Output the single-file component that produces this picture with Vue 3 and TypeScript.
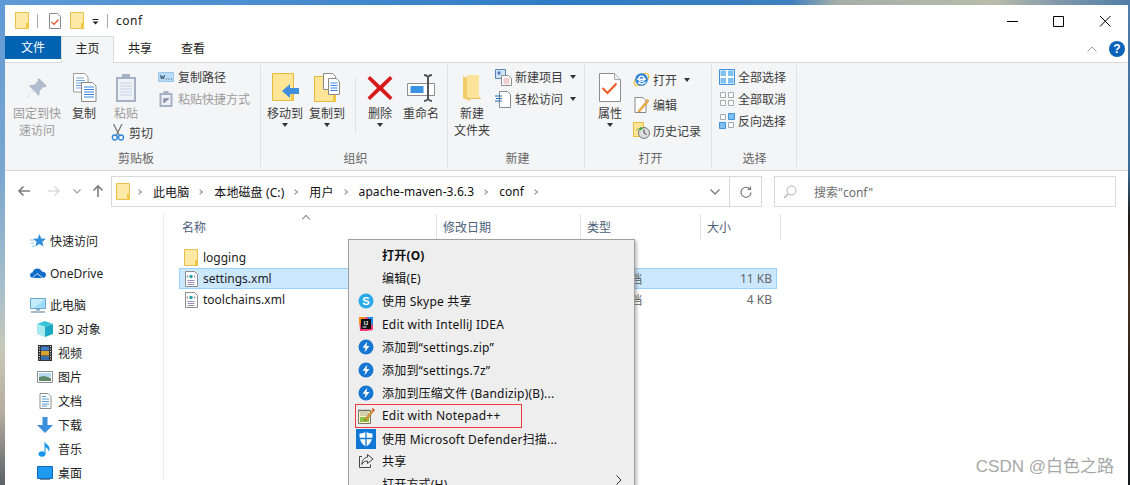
<template>
  <div class="desktop">
    <!-- shared icons -->
    <svg class="defs" aria-hidden="true">
      <symbol id="folder" viewBox="0 0 14 17">
        <path d="M.5.5h13v16H.5z" fill="#ffe9a6" stroke="#e9bf4d" />
        <path d="M11 11h3v6h-3z" fill="#f3c746" />
      </symbol>
      <symbol id="xml" viewBox="0 0 16 16">
        <path d="M2.500.5h9l3 3v12h-12z" fill="#fff" stroke="#8d8d8d" />
        <path d="M5 4.500 3.800 5.500 5 6.500M11 4.500l1.200 1L11 6.500" fill="none" stroke="#666" stroke-width=".8" />
        <circle cx="8" cy="5.500" r="1.800" fill="#2ba3a8" />
        <path d="M4.500 9.500h7M4.500 11.500h7M4.500 13.500h7" stroke="#9a8fbd" />
      </symbol>
      <symbol id="star" viewBox="0 0 16 16">
        <path d="m9.500 1 1.700 4.400 4.800.3-3.700 3 1.200 4.800-4-2.600-4.100 2.600 1.200-4.800-3.700-3 4.900-.3z" fill="#2f8fdc" />
        <path d="M0 7h4M1 10h3M2 13h3" stroke="#8cc4ef" />
      </symbol>
      <symbol id="cloud" viewBox="0 0 16 16">
        <path d="M3.500 13C1.500 13 0 11.800 0 10.200 0 8.700 1 7.700 2.500 7.500 3.300 5 5.300 3.500 7.500 3.500c2 0 3.600 1.200 4.200 3 2.300-.2 4.300 1.300 4.300 3.300 0 1.800-1.400 3.200-3.200 3.200z" fill="#0f6cc8" />
        <path d="M2.500 13 7 8.500l6 4.500" fill="none" stroke="#fff" stroke-width=".8" />
      </symbol>
      <symbol id="pc" viewBox="0 0 16 16">
        <path d="M.5 1.500h15v10H.5z" fill="#9fdcf8" stroke="#6aa8cf" />
        <path d="M1 2h14L3 11H1z" fill="#c5ecfc" />
        <path d="M6 12h4v1.500H6z" fill="#8ba4b8" />
        <path d="M1 15h14" stroke="#8ba4b8" stroke-width="1.500" />
      </symbol>
      <symbol id="cube" viewBox="0 0 16 16">
        <path d="M8 0 16 3 8 6 0 3z" fill="#35c4d8" />
        <path d="M0 3 8 6v10L0 13z" fill="#a6e9ef" />
        <path d="M16 3 8 6v10l8-3z" fill="#1ca7c4" />
      </symbol>
      <symbol id="film" viewBox="0 0 16 16">
        <path d="M1 0h14v16H1z" fill="#333" />
        <path d="M4 1.500h8v4H4z" fill="#3f7fc8" />
        <path d="M4 6h8v4.500H4z" fill="#d6a52c" />
        <path d="M4 11h8v4H4z" fill="#3a6fae" />
        <path d="M2.500 1v14M13.500 1v14" stroke="#ddd" stroke-dasharray="1 1.500" />
      </symbol>
      <symbol id="pic" viewBox="0 0 16 16">
        <path d="M.5 2.500h15v11H.5z" fill="#fff" stroke="#8f8f8f" />
        <path d="M2 4h12v4H2z" fill="#b6d9f2" />
        <path d="M2 8l5-1 7 2v3H2z" fill="#5f8a6a" />
      </symbol>
      <symbol id="doc" viewBox="0 0 16 16">
        <path d="M3 .5h8l3 3v12H3z" fill="#fff" stroke="#8d8d8d" />
        <path d="M5 3.500h4M5 6h7M5 8.500h7M5 11h7M5 13h5" stroke="#5b9bd5" />
      </symbol>
      <symbol id="down" viewBox="0 0 16 16">
        <path d="M5.500 0h5v8H16l-8 8-8-8h5.500z" fill="#3b8ddd" />
      </symbol>
      <symbol id="music" viewBox="0 0 16 16">
        <ellipse cx="5" cy="13" rx="3.500" ry="2.800" fill="#1a96ee" />
        <path d="M7.500 13V0c.5 3 5 3.500 5 8 0 1-.4 2-1 2.800.3-2.800-2-4-3-4.600V13z" fill="#1a96ee" />
      </symbol>
      <symbol id="screen" viewBox="0 0 16 16">
        <path d="M.5 1.500h15v12H.5z" fill="#1e9af0" stroke="#0f6cb8" />
        <path d="M3 14.500h10" stroke="#7a8b99" />
      </symbol>
      <symbol id="skype" viewBox="0 0 16 16">
        <circle cx="8" cy="8" r="7.500" fill="#2aa9e8" />
      </symbol>
      <symbol id="idea" viewBox="0 0 16 16">
        <path d="M1 1h9l5 4v9l-6 1H2z" fill="#fc3a7a" />
        <path d="M1 1h7L1 9z" fill="#ff8f1f" />
        <path d="M9 1h6v9z" fill="#1d8ce8" />
        <path d="M3 3h10v10H3z" fill="#111" />
        <path d="M4.500 11h4" stroke="#fff" />
      </symbol>
      <symbol id="bandizip" viewBox="0 0 16 16">
        <circle cx="8" cy="8" r="7.500" fill="#1677d2" />
        <path d="M9.200 2.800 4.500 8.800h3l-1 4.400L11.500 7h-3z" fill="#fff" />
      </symbol>
      <symbol id="notepad" viewBox="0 0 18 18">
        <path d="M1.500 3.500h12v13h-12z" fill="#fff6c9" stroke="#7a7a6a" />
        <path d="M3 10h9v5H3z" fill="#8bc34a" />
        <path d="M3 6h9M3 8h9" stroke="#a9a98a" />
        <path d="M2 2.500v2M4 2.500v2M6 2.500v2M8 2.500v2M10 2.500v2M12 2.500v2" stroke="#666" />
        <path d="m8 12 8-10 1.500 1.200-8 10L7.500 14z" fill="#e8a33a" stroke="#8a4b1e" stroke-width=".5" />
        <path d="m15.500 1 2.500 2-1 1-2.400-2z" fill="#e24b3a" />
      </symbol>
      <symbol id="defender" viewBox="0 0 20 20">
        <path d="M0 0h20v20H0z" fill="#0f78d4" />
        <path d="M10 2.500c2 1.500 4 2 6.500 2 .2 6-1.500 10.500-6.500 13-5-2.500-6.700-7-6.500-13 2.500 0 4.500-.5 6.500-2z" fill="#fff" />
        <path d="M10 2.500v15M3.600 9.500h12.800" stroke="#0f78d4" stroke-width="1.300" />
      </symbol>
      <symbol id="share" viewBox="0 0 16 16">
        <path d="M4 3.500H1.500v11h11v-3" fill="none" stroke="#444" />
        <path d="M9.500 1.500 15 6l-5.500 4.500V8C7 8 5 9 3.800 11.500 4 7.500 6 4.500 9.500 4.200z" fill="none" stroke="#444" />
      </symbol>
      <symbol id="pin" viewBox="0 0 22 22">
        <path d="M13 1l8 8-2 1.500-1.500-.5-4 4c.5 2 .2 3.500-1 5L7.500 13 1.500 20.500 1 20l7-6.500L3 9c1.500-1.200 3-1.500 5-1l4-4-.5-1.500z" fill="#b1bccf" />
      </symbol>
      <symbol id="copy" viewBox="0 0 25 29">
        <path d="M1.500.5h11l3.500 3.500v15H1.500z" fill="#fff" stroke="#9a9a9a" />
        <path d="M4 5h8M4 7.500h9M4 10h9M4 12.500h9M4 15h9" stroke="#6ea6e0" />
        <path d="M9.500 9.500h11l3.500 3.500v15.500H9.500z" fill="#fff" stroke="#8a8a8a" />
        <path d="M12 14h10M12 16.500h10M12 19h10M12 21.500h10M12 24h10" stroke="#3d84e0" />
      </symbol>
      <symbol id="paste" viewBox="0 0 22 30">
        <path d="M1 4h20v25H1z" fill="#a7b1c4" />
        <path d="M3 6h16v21H3z" fill="#eef1f6" />
        <path d="M7 1h8v5H7z" fill="#a7b1c4" />
        <path d="M5 10h12M5 13h12M5 16h12M5 19h12M5 22h12" stroke="#c8d2e8" />
      </symbol>
      <symbol id="scissors" viewBox="0 0 14 17">
        <path d="M2.500 0 8 11M11 0 5.500 11" stroke="#777" stroke-width="1.300" fill="none" />
        <circle cx="3.800" cy="13.500" r="2.500" fill="none" stroke="#2a85d8" stroke-width="1.300" />
        <circle cx="10" cy="13.500" r="2.500" fill="none" stroke="#2a85d8" stroke-width="1.300" />
      </symbol>
      <symbol id="copypath" viewBox="0 0 16 16">
        <path d="M.5 3.500h15v9H.5z" fill="#b7dcf7" stroke="#9cc5e6" />
        <path d="M2.500 6l1 4 1-3 1 3 1-4M8 10h1M10.500 10h1M13 10h1" fill="none" stroke="#345" stroke-width=".9" />
      </symbol>
      <symbol id="pasteshort" viewBox="0 0 14 16">
        <path d="M.5 2h13v14H.5z" fill="#a7b1c4" />
        <path d="M2.500 4h9v10h-9z" fill="#eef1f6" />
        <path d="M4.500 0h5v3h-5z" fill="#a7b1c4" />
        <path d="M5 12V8h4.500M5.500 11 9.500 7" stroke="#7d889c" stroke-width="1.300" fill="none" />
      </symbol>
      <symbol id="moveto" viewBox="0 0 27 29">
        <path d="M.5.500h21v27H.5z" fill="#ffe596" stroke="#e6b93f" />
        <path d="M19 20h3v8h-3z" fill="#f3c746" />
        <path d="M10 18 18 11v4h9v6h-9v4z" fill="#3f8fdc" />
      </symbol>
      <symbol id="copyto" viewBox="0 0 27 30">
        <path d="M.5 3.500h21v25H.5z" fill="#ffe596" stroke="#e6b93f" />
        <path d="M19 21h3v8h-3z" fill="#f3c746" />
        <path d="M9.500.500h9l3 3v13h-12z" fill="#fff" stroke="#8a8a8a" />
        <path d="M14.500 5.500h8l3 3v13h-11z" fill="#fff" stroke="#8a8a8a" />
        <path d="M16.500 10h7M16.500 12.500h7M16.500 15h7M16.500 17.500h7" stroke="#3d84e0" />
      </symbol>
      <symbol id="delete" viewBox="0 0 26 26">
        <path d="M3 1 13 10.500 23 1 25.500 3.500 16 13l9.500 9.500L23 25 13 15.500 3 25 .5 22.500 10 13 .5 3.500z" fill="#d61a1a" />
      </symbol>
      <symbol id="rename" viewBox="0 0 29 28">
        <path d="M.5 9.500h27v12H.5z" fill="#fff" stroke="#8f8f8f" />
        <path d="M3.500 12h13v7h-13z" fill="#3a93e2" />
        <path d="M17 1c2 0 3 .5 4 2 1-1.500 2-2 4-2M17 27c2 0 3-.5 4-2 1 1.500 2 2 4 2M21 3v22" fill="none" stroke="#555" stroke-width="2" />
      </symbol>
      <symbol id="newfolder" viewBox="0 0 20 28">
        <path d="M1 2l7 3v22L1 24z" fill="#f2cb6b" />
        <path d="M5 1h12v21l2 3H7L5 22z" fill="#fde39a" />
        <path d="M5 24h14v1H7z" fill="#e8c063" />
      </symbol>
      <symbol id="newitem" viewBox="0 0 17 17">
        <path d="M.5.500h10v9H.5z" fill="#cfe6fa" stroke="#5b86ad" />
        <path d="M2.500 2.500h3v3h-3z" fill="#4f81b5" />
        <path d="M6.500 6.500h7l3 3v7h-10z" fill="#fff" stroke="#8d8d8d" />
        <path d="M8.500 10h6M8.500 12h6M8.500 14h6" stroke="#e29a9a" />
      </symbol>
      <symbol id="easy" viewBox="0 0 17 17">
        <path d="M4.500.500h8l3 3v13h-11z" fill="#fff" stroke="#8a8a8a" />
        <path d="M0 5h7M1 7.500h6M0 10h7" stroke="#1d6fb8" />
      </symbol>
      <symbol id="props" viewBox="0 0 22 29">
        <path d="M.5.500h15l6 6v22H.5z" fill="#fff" stroke="#8d8d8d" />
        <path d="M15.500.500v6h6" fill="#eee" stroke="#aaa" />
        <path d="m3.500 15 5 5 9-9.500" fill="none" stroke="#f05a22" stroke-width="2" />
      </symbol>
      <symbol id="ie" viewBox="0 0 17 17">
        <ellipse cx="8.500" cy="8.500" rx="8.300" ry="4.500" transform="rotate(-35 8.500 8.500)" fill="none" stroke="#f4c33a" stroke-width="1.300" />
        <circle cx="8.500" cy="8.500" r="6.300" fill="#2a83d8" />
        <path d="M4 8.200h9M12.600 10.800c-1 2.200-5.800 2.600-7.400.5" fill="none" stroke="#fff" stroke-width="1.500" />
        <circle cx="8.500" cy="7.800" r="2.600" fill="none" stroke="#fff" stroke-width="1.300" />
      </symbol>
      <symbol id="edit" viewBox="0 0 16 16">
        <path d="M1.500.500h8l3 3v12h-11z" fill="#fff" stroke="#8a8a8a" />
        <path d="m5 13.500 9-11 1.500 1.200-9 11-2 .5z" fill="#f6b73c" stroke="#b97a1e" stroke-width=".5" />
      </symbol>
      <symbol id="history" viewBox="0 0 17 17">
        <path d="M.5.500h10v14H.5z" fill="#ffe596" stroke="#e6b93f" />
        <circle cx="11" cy="11" r="5.500" fill="#ddd" stroke="#777" />
        <path d="M11 7.500V11l2.500 1.500" fill="none" stroke="#444" />
        <path d="M2.500 9c1-2 3-3 5-3l-.5-1.500 3 2-3 2V7c-1.500.2-3 .8-4.500 2z" fill="#38a538" />
      </symbol>
      <symbol id="selall" viewBox="0 0 16 16">
        <path d="M.5.500h15v15H.5z" fill="#fff" stroke="#3e92de" />
        <path d="M1.500 1.500h5.500v5.500H1.500zM9 1.500h5.500v5.500H9zM1.500 9h5.500v5.500H1.500zM9 9h5.500v5.500H9z" fill="#7fc0f2" />
      </symbol>
      <symbol id="selnone" viewBox="0 0 16 16">
        <path d="M1.500 1.500h5v5h-5zM9.500 1.500h5v5h-5zM1.500 9.500h5v5h-5zM9.500 9.500h5v5h-5z" fill="#fff" stroke="#a9a9a9" />
      </symbol>
      <symbol id="selinv" viewBox="0 0 16 16">
        <path d="M1.500 1.500h5v5h-5zM9.500 9.500h5v5h-5z" fill="#fff" stroke="#a9a9a9" />
        <path d="M9.500 .5h6v6h-6zM.5 9.500h6v6h-6z" fill="#7fc0f2" stroke="#3e92de" />
      </symbol>
    </svg>

    <div class="window">
      <!-- title bar -->
      <div class="titlebar">
        <svg class="title-folder"><use href="#folder" /></svg>
        <i class="title-sep"></i>
        <svg class="title-doc" viewBox="0 0 12 16">
          <path d="M.5.500h8l3 3v12H.5z" fill="#fff" stroke="#8a8a8a" />
          <path d="m2.500 9 2.500 2.500 4.500-5" fill="none" stroke="#e9502a" stroke-width="1.200" />
        </svg>
        <svg class="title-folder second"><use href="#folder" /></svg>
        <svg class="title-drop" viewBox="0 0 7 6"><path d="M.5.500h6" stroke="#222" /><path d="M.5 2.500h6L3.500 5.500z" fill="#222" /></svg>
        <i class="title-sep"></i>
        <span class="title-text">conf</span>
        <div class="win-controls">
          <svg viewBox="0 0 46 30"><path d="M17 15.500h11" stroke="#000" /></svg>
          <svg viewBox="0 0 46 30"><path d="M17.500 10.500h10v10h-10z" fill="none" stroke="#000" /></svg>
          <svg viewBox="0 0 46 30"><path d="M18 10l10.500 10.500M28.500 10 18 20.500" stroke="#000" /></svg>
        </div>
      </div>

      <!-- tabs -->
      <div class="tabs">
        <span class="tab file-tab">文件</span>
        <span class="tab active">主页</span>
        <span class="tab">共享</span>
        <span class="tab">查看</span>
        <svg class="ribbon-toggle" viewBox="0 0 10 6"><path d="m.5 5.500 4.500-4.500 4.500 4.500" fill="none" stroke="#9a9a9a" /></svg>
        <span class="help">?</span>
      </div>

      <!-- ribbon -->
      <div class="ribbon">
        <section class="group clip">
          <div class="group-body">
            <div class="large wide disabled">
              <span class="large-icon"><svg width="22" height="22"><use href="#pin" /></svg></span>
              <span class="large-label">固定到快<br />速访问</span>
            </div>
            <div class="large mid">
              <span class="large-icon"><svg width="25" height="29"><use href="#copy" /></svg></span>
              <span class="large-label">复制</span>
            </div>
            <div class="paste-col">
              <div class="large paste disabled">
                <span class="large-icon"><svg width="22" height="30"><use href="#paste" /></svg></span>
                <span class="large-label">粘贴</span>
              </div>
              <div class="cut"><svg width="14" height="17"><use href="#scissors" /></svg>剪切</div>
            </div>
            <div class="small-col paths">
              <div class="small"><svg width="16" height="16"><use href="#copypath" /></svg>复制路径</div>
              <div class="small disabled"><svg width="16" height="16"><use href="#pasteshort" /></svg>粘贴快捷方式</div>
            </div>
          </div>
          <div class="group-title">剪贴板</div>
        </section>

        <section class="group org">
          <div class="group-body">
            <div class="large btn42">
              <span class="large-icon"><svg width="27" height="29"><use href="#moveto" /></svg></span>
              <span class="large-label">移动到</span>
              <span class="caret"></span>
            </div>
            <div class="large btn42">
              <span class="large-icon"><svg width="27" height="30"><use href="#copyto" /></svg></span>
              <span class="large-label">复制到</span>
              <span class="caret"></span>
            </div>
            <i class="inner-sep"></i>
            <div class="large btn40">
              <span class="large-icon"><svg width="26" height="26"><use href="#delete" /></svg></span>
              <span class="large-label">删除</span>
              <span class="caret"></span>
            </div>
            <div class="large btn42">
              <span class="large-icon"><svg width="29" height="28"><use href="#rename" /></svg></span>
              <span class="large-label">重命名</span>
            </div>
          </div>
          <div class="group-title">组织</div>
        </section>

        <section class="group create">
          <div class="group-body">
            <div class="large btn42">
              <span class="large-icon"><svg width="20" height="28"><use href="#newfolder" /></svg></span>
              <span class="large-label">新建<br />文件夹</span>
            </div>
            <div class="small-col tight">
              <div class="small"><svg width="17" height="17"><use href="#newitem" /></svg>新建项目<span class="caret inline"></span></div>
              <div class="small"><svg width="17" height="17"><use href="#easy" /></svg>轻松访问<span class="caret inline"></span></div>
            </div>
          </div>
          <div class="group-title">新建</div>
        </section>

        <section class="group open">
          <div class="group-body">
            <div class="large btn40">
              <span class="large-icon"><svg width="22" height="29"><use href="#props" /></svg></span>
              <span class="large-label">属性</span>
              <span class="caret"></span>
            </div>
            <div class="small-col spaced">
              <div class="small"><svg width="17" height="17"><use href="#ie" /></svg>打开<span class="caret inline"></span></div>
              <div class="small"><svg width="17" height="16"><use href="#edit" /></svg>编辑</div>
              <div class="small"><svg width="17" height="17"><use href="#history" /></svg>历史记录</div>
            </div>
          </div>
          <div class="group-title">打开</div>
        </section>

        <section class="group select">
          <div class="group-body">
            <div class="small-col">
              <div class="small"><svg width="16" height="16"><use href="#selall" /></svg>全部选择</div>
              <div class="small"><svg width="16" height="16"><use href="#selnone" /></svg>全部取消</div>
              <div class="small"><svg width="16" height="16"><use href="#selinv" /></svg>反向选择</div>
            </div>
          </div>
          <div class="group-title">选择</div>
        </section>
      </div>

      <!-- address row -->
      <div class="address-row">
        <div class="nav-buttons">
          <svg viewBox="0 0 14 12" class="nav-arrow"><path d="M13 6H2M6.500 1.500 2 6l4.500 4.500" fill="none" stroke="#7d7d7d" stroke-width="1.600" /></svg>
          <svg viewBox="0 0 14 12" class="nav-arrow"><path d="M1 6h11M7.500 1.500 12 6l-4.500 4.500" fill="none" stroke="#dcdcdc" stroke-width="1.600" /></svg>
          <svg viewBox="0 0 8 5" class="nav-down"><path d="m.5.500 3.500 3.500L7.500.5" fill="none" stroke="#a0a0a0" stroke-width="1.200" /></svg>
          <svg viewBox="0 0 12 14" class="nav-up"><path d="M6 13V2M1.500 6.500 6 2l4.500 4.500" fill="none" stroke="#7d7d7d" stroke-width="1.600" /></svg>
        </div>
        <div class="address">
          <svg class="address-folder"><use href="#folder" /></svg>
          <template v-for="crumb in crumbs" :key="crumb">
            <span class="chevron"></span>
            <span class="crumb">{{ crumb }}</span>
          </template>
          <span class="chevron"></span>
          <svg class="addr-drop" viewBox="0 0 10 6"><path d="m.5.500 4.500 4.500 4.500-4.500" fill="none" stroke="#7a7a7a" stroke-width="1.300" /></svg>
          <span class="refresh">
            <svg viewBox="0 0 12 12" width="12" height="12"><path d="M9.800 3A5 5 0 1 0 11 6.500" fill="none" stroke="#777" stroke-width="1.200" /><path d="M10.500.5v3h-3" fill="none" stroke="#777" stroke-width="1.200" /></svg>
          </span>
        </div>
        <div class="search">
          <svg viewBox="0 0 14 14" width="14" height="14"><circle cx="8.500" cy="5.500" r="4.500" fill="none" stroke="#b0b0b0" /><path d="M5.300 8.700 1 13" stroke="#b0b0b0" stroke-width="1.300" /></svg>
          <span>搜索"conf"</span>
        </div>
      </div>

      <!-- nav tree and file list -->
      <div class="main">
        <nav class="tree">
          <div
            v-for="item in treeItems"
            :key="item.label"
            class="tree-item"
            :class="{ sub: item.sub, first: item.first }"
          >
            <svg width="16" height="16"><use :href="'#' + item.icon" /></svg>
            <span>{{ item.label }}</span>
          </div>
        </nav>

        <div class="files">
          <div class="file-head">
            <div class="col col-name">名称<span class="sort"></span></div>
            <div class="col col-date">修改日期</div>
            <div class="col col-type">类型</div>
            <div class="col col-size">大小</div>
          </div>
          <div class="file-rows">
            <div v-for="file in files" :key="file.name" class="file-row" :class="{ selected: file.selected }">
              <div class="cell-name">
                <span class="cell-icon">
                  <svg v-if="file.icon === 'folder'" width="14" height="17"><use href="#folder" /></svg>
                  <svg v-else width="16" height="16"><use href="#xml" /></svg>
                </span>
                <span>{{ file.name }}</span>
              </div>
              <div class="cell-type">{{ file.type }}</div>
              <div class="cell-size">{{ file.size }}</div>
            </div>
          </div>
        </div>
      </div>

      <!-- context menu over the list -->
      <ul class="menu">
        <li v-for="entry in menuItems" :key="entry.label" class="menu-item" :class="{ bold: entry.bold, marked: entry.marked }">
          <span class="menu-icon">
            <svg v-if="entry.icon" :width="entry.size || 16" :height="entry.size || 16">
              <use :href="'#' + entry.icon" />
              <text v-if="entry.glyph" x="8" :y="entry.glyphY" :font-size="entry.glyphSize" font-weight="700" text-anchor="middle" fill="#fff" font-family="Liberation Sans, sans-serif">{{ entry.glyph }}</text>
            </svg>
          </span>
          <span>{{ entry.label }}</span>
          <svg v-if="entry.submenu" class="menu-arrow" viewBox="0 0 6 10"><path d="m.5.500 4.500 4.500-4.500 4.500" fill="none" stroke="#333" /></svg>
        </li>
      </ul>

      <div class="watermark">CSDN @白色之路</div>
    </div>
  </div>
</template>

<script setup lang="ts">
interface TreeItem {
  label: string
  icon: string
  sub?: boolean
  first?: boolean
}

interface FileRow {
  name: string
  icon: string
  type: string
  size: string
  selected?: boolean
}

interface MenuEntry {
  label: string
  icon?: string
  size?: number
  glyph?: string
  glyphY?: number
  glyphSize?: number
  bold?: boolean
  marked?: boolean
  submenu?: boolean
}

const crumbs = ['此电脑', '本地磁盘 (C:)', '用户', 'apache-maven-3.6.3', 'conf']

const treeItems: TreeItem[] = [
  { label: '快速访问', icon: 'star' },
  { label: 'OneDrive', icon: 'cloud', first: true },
  { label: '此电脑', icon: 'pc', first: true },
  { label: '3D 对象', icon: 'cube', sub: true },
  { label: '视频', icon: 'film', sub: true },
  { label: '图片', icon: 'pic', sub: true },
  { label: '文档', icon: 'doc', sub: true },
  { label: '下载', icon: 'down', sub: true },
  { label: '音乐', icon: 'music', sub: true },
  { label: '桌面', icon: 'screen', sub: true },
]

const files: FileRow[] = [
  { name: 'logging', icon: 'folder', type: '文件夹', size: '' },
  { name: 'settings.xml', icon: 'xml', type: 'XML 文档', size: '11 KB', selected: true },
  { name: 'toolchains.xml', icon: 'xml', type: 'XML 文档', size: '4 KB' },
]

const menuItems: MenuEntry[] = [
  { label: '打开(O)', bold: true },
  { label: '编辑(E)' },
  { label: '使用 Skype 共享', icon: 'skype', glyph: 'S', glyphY: 12, glyphSize: 11 },
  { label: 'Edit with IntelliJ IDEA', icon: 'idea', glyph: 'IJ', glyphY: 8.5, glyphSize: 5 },
  { label: '添加到“settings.zip”', icon: 'bandizip' },
  { label: '添加到“settings.7z”', icon: 'bandizip' },
  { label: '添加到压缩文件 (Bandizip)(B)...', icon: 'bandizip' },
  { label: 'Edit with Notepad++', icon: 'notepad', size: 18, marked: true },
  { label: '使用 Microsoft Defender扫描...', icon: 'defender', size: 20 },
  { label: '共享', icon: 'share' },
  { label: '打开方式(H)', submenu: true },
]
</script>

<style>
html,
body {
  margin: 0;
  background: #fff;
}
</style>

<style scoped>
.desktop {
  width: 1130px;
  height: 485px;
  box-sizing: border-box;
  padding: 5px 2px 0 5px;
  overflow: hidden;
  font-family: "Noto Sans", "Noto Sans CJK SC", sans-serif;
  font-size: 12px;
  color: #222;
  background:
    linear-gradient(90deg, #5f9ad6 0%, #4d8fd0 20%, #2f7cc6 50%, #3d80bd 70%, #a5aea8 74%, #b9bcaa 88%, #7e96aa 94%, #4f7ea8 100%) top / 100% 5px no-repeat,
    linear-gradient(180deg, #5f9ad6 0%, #7aa6cf 35%, #a9bfcb 60%, #c8c8b8 72%, #b5ada0 85%, #5b6268 100%) left / 5px 100% no-repeat,
    linear-gradient(180deg, #4f7ea8 0%, #3a6b95 35%, #1d1a18 45%, #4a3320 60%, #26201c 80%, #16181c 100%) right / 2px 100% no-repeat;
}

.defs {
  display: block;
  width: 0;
  height: 0;
}

.window {
  position: relative;
  height: 480px;
  background: #fff;
  overflow: hidden;
}

svg {
  display: block;
  flex: none;
}

/* title bar */
.titlebar {
  display: flex;
  align-items: center;
  height: 31px;
  padding-left: 10px;
}

.title-folder {
  width: 14px;
  height: 17px;
}

.title-folder.second {
  margin-left: 9px;
}

.title-sep {
  width: 1px;
  height: 14px;
  margin: 0 11px 0 8px;
  background: #a8a8a8;
}

.title-doc {
  width: 12px;
  height: 16px;
}

.title-drop {
  width: 7px;
  height: 6px;
  margin: 2px 0 0 8px;
}

.title-text {
  font-size: 12px;
  letter-spacing: 0.5px;
  margin-left: -3px;
}

.win-controls {
  display: flex;
  margin-left: auto;
}

.win-controls svg {
  width: 46px;
  height: 30px;
}

/* tabs */
.tabs {
  display: flex;
  align-items: flex-start;
  height: 26px;
  border-bottom: 1px solid #d9d9d9;
  box-sizing: content-box;
}

.tab {
  height: 26px;
  line-height: 26px;
  text-align: center;
}

.file-tab {
  width: 56px;
  height: 23px;
  line-height: 23px;
  background: #0063b1;
  color: #fff;
}

.tab.active {
  width: 51px;
  box-sizing: content-box;
  border: 1px solid #d9d9d9;
  border-bottom: none;
  background: #f4f5f7;
  line-height: 24px;
}

.tab:nth-child(3) {
  width: 52px;
}

.tab:nth-child(4) {
  width: 54px;
}

.ribbon-toggle {
  width: 10px;
  height: 6px;
  margin: 10px 0 0 auto;
}

.help {
  width: 16px;
  height: 16px;
  margin: 5px 3px 0 12px;
  border-radius: 50%;
  background: #0a63b8;
  color: #fff;
  font: 700 12px/16px "Liberation Sans", sans-serif;
  text-align: center;
}

/* ribbon */
.ribbon {
  display: flex;
  height: 107px;
  box-sizing: content-box;
  background: #f4f5f7;
  border-bottom: 1px solid #d9d9d9;
  color: #3c3c3c;
}

.group {
  display: flex;
  flex-direction: column;
  height: 102px;
  margin-top: 2px;
  border-right: 1px solid #dfe0e2;
  box-sizing: border-box;
}

.group.clip {
  width: 256px;
  padding-left: 7px;
}

.group.org {
  width: 187px;
  padding-left: 3px;
}

.group.create {
  width: 137px;
  padding-left: 3px;
}

.group.open {
  width: 127px;
  padding-left: 5px;
}

.group.select {
  width: 85px;
  padding-left: 1px;
}

.group-body {
  display: flex;
  flex: 1;
  min-height: 0;
}

.group-title {
  height: 19px;
  line-height: 21px;
  text-align: center;
  color: #666;
}

.large {
  display: flex;
  flex-direction: column;
  align-items: center;
  flex: none;
  padding-top: 5px;
}

.wide {
  width: 50px;
}

.mid {
  width: 44px;
}

.btn42 {
  width: 42px;
}

.btn40 {
  width: 40px;
}

.large-icon {
  display: flex;
  align-items: center;
  height: 35px;
}

.large-label {
  line-height: 17px;
  text-align: center;
  white-space: nowrap;
}

.disabled {
  color: #9b9b9b;
}

.caret {
  width: 0;
  height: 0;
  margin-top: 1px;
  border: 3.5px solid transparent;
  border-top: 4px solid #333;
  border-bottom: none;
}

.caret.inline {
  margin: 0 0 0 4px;
}

.inner-sep {
  width: 1px;
  height: 55px;
  margin: 13px 4px 0 7px;
  background: #e0e1e3;
}

.paste-col {
  width: 46px;
  flex: none;
}

.paste {
  width: 40px;
}

.cut {
  display: flex;
  align-items: center;
  gap: 4px;
  height: 17px;
  margin: 2px 0 0 5px;
  white-space: nowrap;
}

.small-col {
  display: flex;
  flex-direction: column;
  flex: none;
  margin-left: 6px;
  padding-top: 1px;
}

.small-col.paths .small {
  gap: 4px;
}

.small-col.tight {
  margin-left: 2px;
}

.small-col.spaced {
  margin-left: 3px;
  padding-top: 2px;
}

.small {
  display: flex;
  align-items: center;
  gap: 3px;
  height: 22px;
  white-space: nowrap;
}

.spaced .small {
  height: 25.5px;
}

/* address row */
.address-row {
  display: flex;
  height: 38px;
  padding-top: 5px;
  box-sizing: content-box;
}

.nav-buttons {
  display: flex;
  align-items: center;
  width: 106px;
  height: 30px;
  flex: none;
  padding-left: 12px;
  box-sizing: border-box;
}

.nav-arrow {
  width: 14px;
  height: 12px;
  margin-right: 16px;
}

.nav-arrow + .nav-arrow {
  margin-right: 12px;
}

.nav-down {
  width: 8px;
  height: 5px;
  margin-right: 11px;
}

.nav-up {
  width: 12px;
  height: 14px;
}

.address {
  display: flex;
  align-items: center;
  width: 651px;
  height: 31px;
  box-sizing: border-box;
  padding-left: 4px;
  border: 1px solid #d9d9d9;
}

.address-folder {
  width: 14px;
  height: 17px;
  margin-right: 7px;
}

.chevron {
  width: 4px;
  height: 4px;
  margin: 0 12px 0 9px;
  border-top: 1.200px solid #8a8a8a;
  border-right: 1.200px solid #8a8a8a;
  transform: rotate(45deg);
  box-sizing: border-box;
}

.address-folder + .chevron {
  margin-left: 0;
}

.crumb {
  color: #111;
  letter-spacing: 0.1px;
  white-space: nowrap;
}

.addr-drop {
  width: 10px;
  height: 6px;
  margin-left: auto;
  margin-right: 9px;
}

.refresh {
  display: flex;
  align-items: center;
  justify-content: center;
  width: 31px;
  height: 29px;
  border-left: 1px solid #d9d9d9;
}

.search {
  display: flex;
  align-items: center;
  gap: 17px;
  width: 342px;
  height: 31px;
  box-sizing: border-box;
  margin-left: 12px;
  padding-left: 8px;
  border: 1px solid #d9d9d9;
  color: #6d6d6d;
}

/* main */
.main {
  display: flex;
  height: 266px;
}

.tree {
  width: 158px;
  padding-top: 15px;
  border-right: 1px solid #ececec;
  box-sizing: content-box;
  flex: none;
}

.tree-item {
  display: flex;
  align-items: center;
  gap: 4px;
  height: 24px;
  padding-left: 25px;
  white-space: nowrap;
}

.tree-item.first {
  margin-top: 8px;
}

.tree-item.sub {
  gap: 5px;
  padding-left: 32px;
}

.files {
  flex: 1;
  min-width: 0;
}

.file-head {
  display: flex;
  height: 27px;
  margin-left: 11px;
  color: #4c607a;
}

.col {
  position: relative;
  box-sizing: border-box;
  padding: 0 0 0 6px;
  line-height: 27px;
  border-right: 1px solid #e5e5e5;
}

.col-name {
  width: 262px;
  padding-left: 7px;
}

.col-date {
  width: 144px;
}

.col-type {
  width: 120px;
}

.col-size {
  width: 80px;
}

.sort {
  position: absolute;
  top: -1px;
  left: 128px;
  width: 5px;
  height: 5px;
  margin-top: 3px;
  border-top: 1px solid #8a8a8a;
  border-left: 1px solid #8a8a8a;
  transform: rotate(45deg);
}

.file-rows {
  margin: 6px 0 0 15px;
  width: 598px;
}

.file-row {
  display: flex;
  align-items: center;
  height: 21px;
  box-sizing: border-box;
  border: 1px solid transparent;
}

.file-row.selected {
  background: #cce8ff;
  border-color: #99d1ff;
}

.cell-name {
  display: flex;
  align-items: center;
  gap: 4px;
  width: 411px;
  padding-left: 3px;
  box-sizing: border-box;
}

.cell-icon {
  display: flex;
  justify-content: center;
  width: 16px;
}

.cell-type {
  width: 120px;
  color: #666;
}

.cell-size {
  width: 61px;
  text-align: right;
  color: #666;
}

/* context menu */
.menu {
  position: absolute;
  left: 343px;
  top: 234px;
  width: 287px;
  height: 260px;
  margin: 0;
  padding: 4px 0 0;
  box-sizing: border-box;
  list-style: none;
  background: #eeeeee;
  border: 1px solid #a0a0a0;
  box-shadow: 2px 2px 3px rgba(0, 0, 0, 0.25);
  color: #111;
}

.menu-item {
  position: relative;
  display: flex;
  align-items: center;
  height: 22.900px;
  padding-left: 6px;
  white-space: nowrap;
  letter-spacing: 0.2px;
}

.menu-item.bold {
  font-weight: 700;
}

.menu-icon {
  display: flex;
  align-items: center;
  justify-content: center;
  width: 22px;
  margin-right: 5px;
}

.menu-item.marked::after {
  content: "";
  position: absolute;
  left: 6px;
  right: 112px;
  top: 0;
  bottom: -1px;
  border: 1px solid #ea3a3a;
}

.menu-arrow {
  position: absolute;
  right: 12px;
  top: 2px;
  width: 6px;
  height: 10px;
}

.watermark {
  position: absolute;
  right: 14px;
  bottom: 8px;
  font-family: "Liberation Sans", "Noto Sans CJK SC", sans-serif;
  font-size: 17px;
  color: #a8a8a8;
}
</style>
